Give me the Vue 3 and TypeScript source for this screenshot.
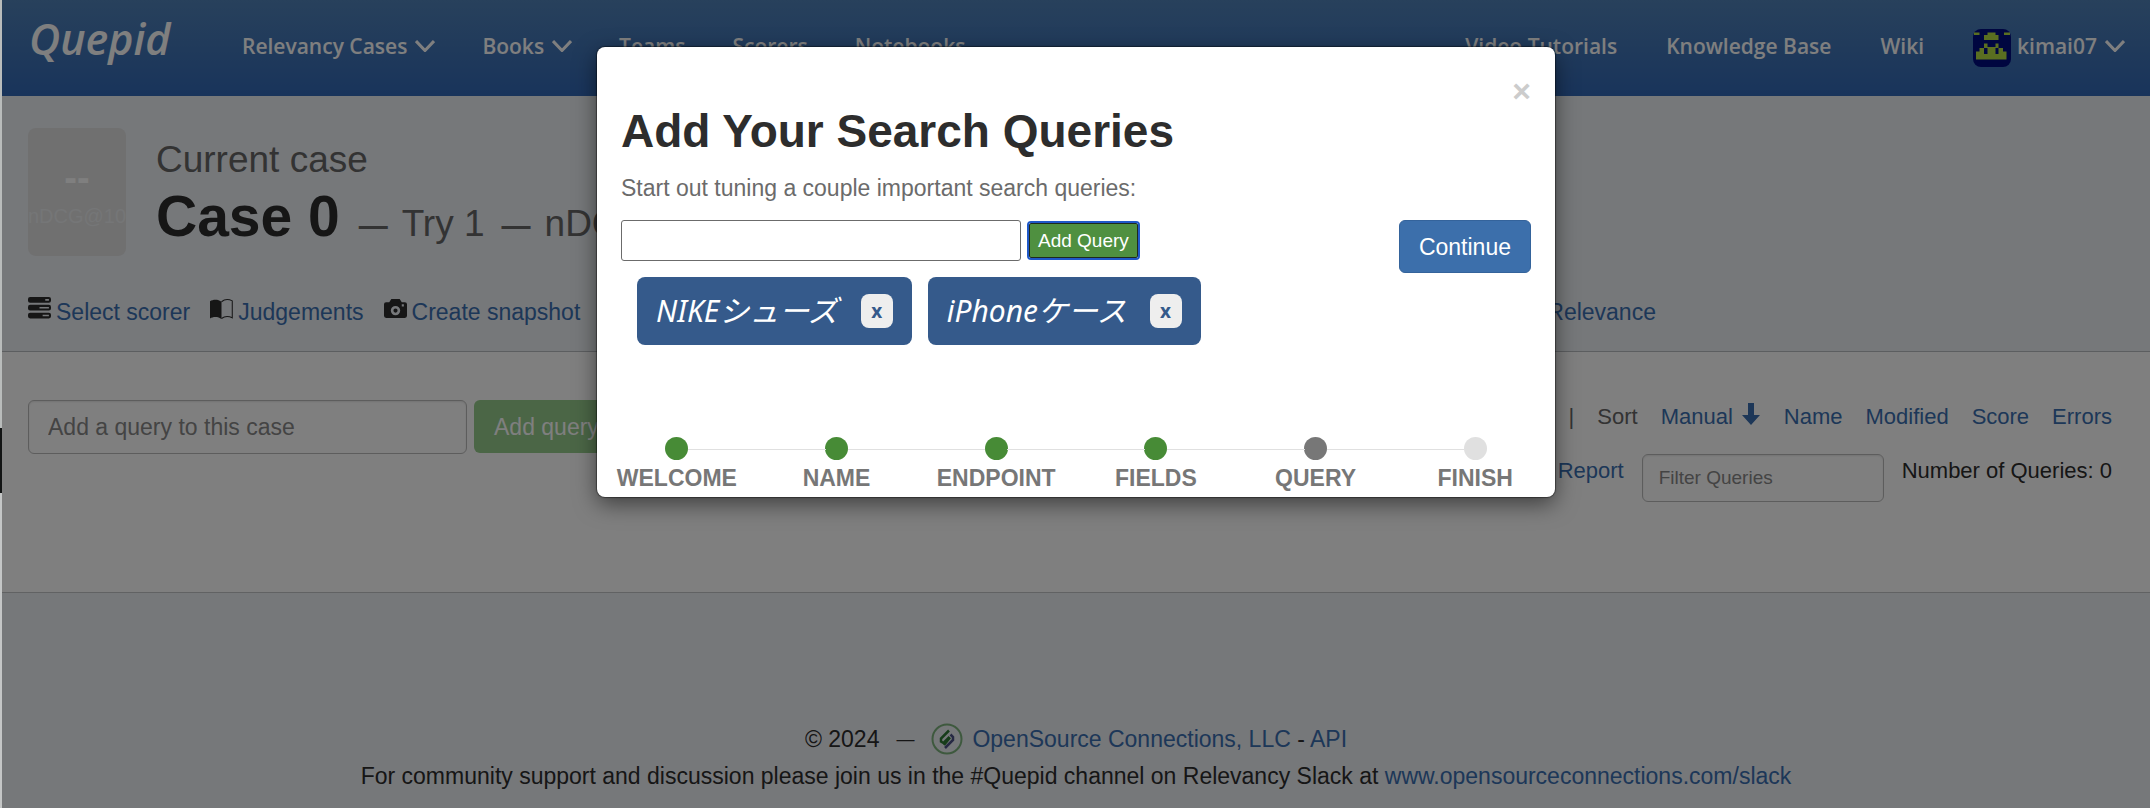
<script setup lang="ts">
import { ref } from 'vue'

interface NavItem { label: string; menu?: boolean }
interface Step { label: string; state: 'done' | 'current' | 'todo' }

const mainNav: NavItem[] = [
  { label: 'Relevancy Cases', menu: true },
  { label: 'Books', menu: true },
  { label: 'Teams' },
  { label: 'Scorers' },
  { label: 'Notebooks' },
]
const helpNav: NavItem[] = [{ label: 'Video Tutorials' }, { label: 'Knowledge Base' }, { label: 'Wiki' }]
const sortKeys: string[] = ['Manual', 'Name', 'Modified', 'Score', 'Errors']
const steps: Step[] = [
  { label: 'Welcome', state: 'done' },
  { label: 'Name', state: 'done' },
  { label: 'Endpoint', state: 'done' },
  { label: 'Fields', state: 'done' },
  { label: 'Query', state: 'current' },
  { label: 'Finish', state: 'todo' },
]
const queries = ref<string[]>(['NIKEシューズ', 'iPhoneケース'])
const draft = ref('')
const newQuery = ref('')
const filter = ref('')

function addQuery(): void {
  const text = draft.value.trim()
  if (text) queries.value.push(text)
  draft.value = ''
}
function removeQuery(index: number): void {
  queries.value.splice(index, 1)
}
</script>

<template>
  <div class="page">
    <header class="topbar">
      <a class="brand" href="#">Quepid</a>
      <nav class="nav main-nav">
        <a v-for="item in mainNav" :key="item.label" href="#">
          {{ item.label }}<svg v-if="item.menu" class="chevron" viewBox="0 0 20 12"><path d="M1 1l9 9.500 9-9.500" /></svg>
        </a>
      </nav>
      <nav class="nav help-nav">
        <a v-for="item in helpNav" :key="item.label" href="#">{{ item.label }}</a>
        <a href="#" class="user">
          <svg class="avatar" viewBox="0 0 38 38">
            <rect width="38" height="38" rx="8" fill="#000c80" />
            <path fill="#b4dc42" d="M1 3.500h5.500V6H1zM31 3.500h6V6h-6zM14.500 3.500h8V6h3v5H11V6h3.500zM11 14.500h3.500V18h8v-3.500h3V19H30v3.500h3.500v8H3v-8h3.500V19H11z" />
            <path fill="#000c80" d="M11 19h3.500v6H11zM22.500 19h3v6h-3z" />
          </svg>
          kimai07<svg class="chevron" viewBox="0 0 20 12"><path d="M1 1l9 9.500 9-9.500" /></svg>
        </a>
      </nav>
    </header>

    <section class="case">
      <div class="case-head">
        <div class="score"><b>--</b><span>nDCG@10</span></div>
        <div class="case-title">
          <p>Current case</p>
          <h2>Case 0 <small><i>—</i>Try 1<i>—</i>nDCG@10</small></h2>
        </div>
      </div>
      <nav class="actions">
        <a href="#">
          <svg class="icon" viewBox="0 0 22 21"><path fill-rule="evenodd" d="M2 0h18a2 2 0 0 1 2 2v1.500a2 2 0 0 1-2 2H2a2 2 0 0 1-2-2V2a2 2 0 0 1 2-2zM16.500 2v1.500H20V2zM2 7.500h18a2 2 0 0 1 2 2V11a2 2 0 0 1-2 2H2a2 2 0 0 1-2-2V9.500a2 2 0 0 1 2-2zM11 9.500V11h9V9.500zM2 15h18a2 2 0 0 1 2 2v1.500a2 2 0 0 1-2 2H2a2 2 0 0 1-2-2V17a2 2 0 0 1 2-2zM14 17v1.500h6V17z" /></svg>
          <span>Select scorer</span>
        </a>
        <a href="#">
          <svg class="icon" viewBox="0 0 22 21"><path d="M0 4C3 2 8 2 11 4.500V21C8 18.500 3 18.500 0 20.500z" /><path class="line" d="M11 4.500c3-2.500 7-2.500 10.300-.8v16.200C18 18.300 14 18.300 11 20.500" /></svg>
          <span>Judgements</span>
        </a>
        <a href="#">
          <svg class="icon" viewBox="0 0 22 21"><path fill-rule="evenodd" d="M2 5h3l2-3h8l2 3h3a2 2 0 0 1 2 2v11a2 2 0 0 1-2 2H2a2 2 0 0 1-2-2V7a2 2 0 0 1 2-2zm9 3.500a4.500 4.500 0 1 0 0 9 4.500 4.500 0 0 0 0-9zm0 2.500a2 2 0 1 1 0 4 2 2 0 0 1 0-4zM17 7v2h2V7z" /></svg>
          <span>Create snapshot</span>
        </a>
        <a href="#" class="tune"><span>Tune Relevance</span></a>
      </nav>
    </section>

    <section class="queries">
      <form class="add-form" @submit.prevent>
        <input v-model="newQuery" type="text" aria-label="Add a query to this case" placeholder="Add a query to this case" />
        <button type="submit">Add query</button>
      </form>
      <div class="tools">
        <nav class="sort">
          <span class="bar">|</span>
          <span class="sort-label">Sort</span>
          <a v-for="key in sortKeys" :key="key" href="#">
            {{ key }}<svg v-if="key === 'Manual'" class="arrow" viewBox="0 0 18 22"><path d="M6 0h6v12h6l-9 10L0 12h6z" /></svg>
          </a>
        </nav>
        <div class="filters">
          <a href="#">Report</a>
          <input v-model="filter" type="text" aria-label="Filter Queries" placeholder="Filter Queries" />
          <span>Number of Queries: 0</span>
        </div>
      </div>
    </section>

    <footer class="footer">
      <p>
        <span>© 2024</span><i>—</i>
        <svg class="osc" viewBox="0 0 32 32">
          <circle cx="16" cy="16" r="14.500" fill="none" stroke="#7cb27c" stroke-width="2" />
          <path d="M18 7.500l-8 8v3l2.500 1.500 6-6" fill="none" stroke="#2f7a35" stroke-width="2.500" />
          <path d="M14 25l8-8v-3l-2.500-2.500" fill="none" stroke="#4d5387" stroke-width="2.500" />
          <path d="M19 14.500l-6 7.500" fill="none" stroke="#2f7a35" stroke-width="2.500" />
        </svg>
        <span><a href="#">OpenSource Connections, LLC</a> - <a href="#">API</a></span>
      </p>
      <p>For community support and discussion please join us in the #Quepid channel on Relevancy Slack at&nbsp;<a href="#">www.opensourceconnections.com/slack</a></p>
    </footer>

    <div class="backdrop">
      <div class="modal" role="dialog" aria-modal="true" aria-labelledby="wizard-title">
        <div class="modal-body">
          <button class="close" type="button" aria-label="Close">×</button>
          <h1 id="wizard-title">Add Your Search Queries</h1>
          <p class="lead"><label for="wizard-query">Start out tuning a couple important search queries:</label></p>
          <div class="entry">
            <form @submit.prevent="addQuery">
              <input id="wizard-query" v-model="draft" type="text" />
              <button class="add" type="submit">Add Query</button>
            </form>
            <button class="continue" type="button">Continue</button>
          </div>
          <ul class="chips">
            <li v-for="(query, index) in queries" :key="query">
              <em>{{ query }}</em>
              <button type="button" :aria-label="`Remove ${query}`" @click="removeQuery(index)">x</button>
            </li>
          </ul>
        </div>
        <ol class="steps">
          <li v-for="step in steps" :key="step.label" :class="step.state">{{ step.label }}</li>
        </ol>
      </div>
    </div>
    <div class="window-edge"></div>
  </div>
</template>

<style>
body {
  margin: 0;
}
</style>

<style scoped>
.page {
  position: relative;
  display: flex;
  flex-direction: column;
  min-height: 100vh;
  padding-left: 2px;
  box-sizing: border-box;
  overflow: hidden;
  background: #ecf0f5;
  color: #2d2d2d;
  font: 23px/30px "Liberation Sans", Arial, "Noto Sans CJK JP", sans-serif;
}
.page * {
  box-sizing: border-box;
}
a {
  color: #3a6fb0;
  text-decoration: none;
}
p, h1, h2, ul, ol {
  margin: 0;
  padding: 0;
}
input, button {
  font: inherit;
}
.topbar {
  display: flex;
  align-items: flex-start;
  height: 96px;
  padding: 0 25px 0 27px;
  background: linear-gradient(#5082b8, #3268b6);
}
.brand {
  width: 213px;
  padding-top: 9px;
  color: #fff;
  font: italic 600 43px/60px "Open Sans", "Noto Sans", sans-serif;
}
.nav {
  display: flex;
  gap: 49px;
  padding-top: 30px;
  font: 600 21px/32px "Open Sans", "Noto Sans", sans-serif;
}
.main-nav {
  gap: 47px;
}
.nav a {
  display: flex;
  align-items: center;
  height: 32px;
  color: #fff;
}
.help-nav {
  margin-left: auto;
}
.chevron {
  width: 20px;
  height: 12px;
  margin-left: 8px;
  fill: none;
  stroke: #fff;
  stroke-width: 3;
}
.avatar {
  width: 38px;
  height: 38px;
  margin: 3px 6px 0 0;
}
.case {
  height: 256px;
  padding: 32px 26px 0;
  border-bottom: 1px solid #b8bcc0;
}
.case-head {
  display: flex;
  gap: 30px;
}
.score {
  display: flex;
  flex-direction: column;
  align-items: center;
  width: 98px;
  height: 128px;
  padding-top: 27px;
  border-radius: 8px;
  background: #e0e0e0;
  color: #fff;
}
.score b {
  font-size: 38px;
  line-height: 46px;
}
.score span {
  color: #eaecee;
  font-size: 20px;
}
.case-title {
  padding-top: 12px;
}
.case-title p {
  color: #666;
  font-size: 37px;
  line-height: 40px;
}
.case-title h2 {
  font-size: 57px;
  line-height: 72px;
  white-space: nowrap;
}
.case-title small {
  color: #666;
  font-size: 37px;
  font-weight: 400;
}
.case-title i {
  margin: 0 14px 0 17px;
  font-size: 29px;
  font-style: normal;
  font-weight: 700;
}
.case-title i:first-child {
  margin-left: 3px;
}
.actions {
  display: flex;
  gap: 20px;
  margin-top: 35px;
}
.actions a {
  display: flex;
  align-items: center;
  gap: 5px;
  height: 30px;
}
.actions .tune {
  margin-left: 889px;
}
.icon {
  width: 23px;
  height: 22px;
  margin-bottom: 8px;
  fill: #2d2d2d;
}
.line {
  fill: none;
  stroke: #2d2d2d;
}
.queries {
  display: flex;
  justify-content: space-between;
  align-items: flex-start;
  height: 241px;
  padding: 48px 38px 0 26px;
  border-bottom: 1px solid #c2c4c6;
  background: #fff;
}
.queries input {
  border: 1px solid #bbb;
  border-radius: 6px;
  background: #fff;
  box-shadow: inset 0 1px 2px rgba(0, 0, 0, 0.1);
}
.queries input::placeholder {
  color: #888;
  opacity: 1;
}
.add-form {
  display: flex;
  gap: 7px;
}
.add-form input {
  width: 439px;
  height: 54px;
  padding: 0 19px;
}
.add-form button {
  height: 53px;
  padding: 0 20px;
  border: 0;
  border-radius: 6px;
  background: #96cc8c;
  color: #fff;
}
.tools {
  font-size: 22px;
}
.sort {
  display: flex;
  justify-content: flex-end;
  gap: 23px;
  padding-top: 2px;
}
.sort a {
  display: flex;
  align-items: center;
}
.bar, .sort-label {
  color: #666;
}
.arrow {
  width: 18px;
  height: 22px;
  margin: 0 1px 6px 9px;
  fill: #3a6fb0;
}
.filters {
  display: flex;
  justify-content: flex-end;
  gap: 18px;
  margin-top: 22px;
  line-height: 34px;
}
.filters input {
  width: 242px;
  height: 48px;
  padding: 0 16px;
  font-size: 19px;
}
.footer {
  display: flex;
  flex-direction: column;
  gap: 4px;
  padding-top: 129px;
}
.footer p {
  display: flex;
  align-items: center;
  justify-content: center;
  height: 33px;
}
.footer i {
  margin: 0 17px;
  font-size: 18px;
  font-style: normal;
}
.osc {
  width: 32px;
  height: 32px;
  margin-right: 9px;
}
.backdrop {
  position: absolute;
  inset: 0 0 0 2px;
  display: flex;
  align-items: flex-start;
  justify-content: center;
  padding-top: 47px;
  background: rgba(0, 0, 0, 0.5);
}
.modal {
  width: 958px;
  border-radius: 8px;
  background: #fff;
  box-shadow: 0 0 1px 1px rgba(0, 0, 0, 0.4), 0 7px 22px rgba(0, 0, 0, 0.5);
}
.modal-body {
  display: flow-root;
  height: 390px;
  padding: 24px;
}
.close {
  float: right;
  padding: 0;
  border: 0;
  background: none;
  color: #ccc;
  font-weight: 700;
  font-size: 32px;
  line-height: 40px;
}
h1 {
  padding-top: 30px;
  font-size: 46px;
  line-height: 60px;
}
.lead {
  margin-top: 12px;
  color: #6b6b6b;
}
.entry, .entry form {
  display: flex;
  align-items: flex-start;
  justify-content: space-between;
}
.entry {
  height: 57px;
  margin-top: 17px;
}
.entry form {
  align-items: center;
  gap: 8px;
}
.entry input {
  width: 400px;
  height: 41px;
  padding: 0 8px;
  border: 1px solid #6b6b6b;
  border-radius: 3px;
}
.add {
  height: 35px;
  padding: 0 8px;
  border: 1px solid #1e2a1e;
  border-radius: 2px;
  outline: 2px solid #1f58c8;
  background: #4f9040;
  color: #fff;
  font-size: 19px;
}
.continue {
  height: 53px;
  padding: 0 19px;
  border: 1px solid #34639b;
  border-radius: 6px;
  background: #3c6fab;
  color: #fff;
}
.chips {
  display: flex;
  gap: 16px;
  padding-left: 16px;
  list-style: none;
}
.chips li {
  display: flex;
  align-items: center;
  gap: 23px;
  height: 68px;
  padding: 0 19px;
  border-radius: 8px;
  background: #355a8b;
  color: #fff;
}
.chips em {
  font: italic 30px/40px "Noto Sans", "Noto Sans CJK JP", sans-serif;
}
.chips button {
  width: 32px;
  height: 34px;
  padding: 0;
  border: 0;
  border-radius: 8px;
  background: #eee;
  color: #355a8b;
  font: 700 19px/24px "Noto Sans", sans-serif;
}
.steps {
  display: flex;
  list-style: none;
}
.steps li {
  position: relative;
  flex: 1;
  height: 60px;
  color: #777;
  font-weight: 700;
  line-height: 32px;
  text-align: center;
  text-transform: uppercase;
}
.steps li::before {
  content: "";
  display: block;
  width: 23px;
  height: 23px;
  margin: 0 auto 2px;
  border-radius: 50%;
  background: #478b36;
}
.steps li + li::after {
  content: "";
  position: absolute;
  top: 12px;
  right: calc(50% + 11px);
  width: calc(100% - 22px);
  height: 1px;
  background: #e0e0e0;
}
.steps .current::before {
  background: #777;
}
.steps .todo::before {
  background: #e0e0e0;
}
.window-edge {
  position: absolute;
  inset: 0 auto 0 0;
  width: 2px;
  background: linear-gradient(#b9bcbb 53%, #121414 53%, #121414 61%, #c4c6c6 61%);
}
</style>
